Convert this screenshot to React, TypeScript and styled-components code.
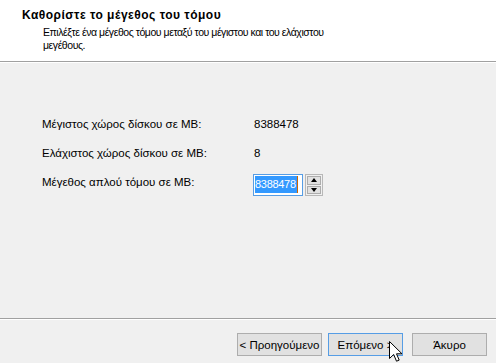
import React from "react";
import styled, { createGlobalStyle } from "styled-components";

const GlobalStyle = createGlobalStyle`
  html, body { margin: 0; padding: 0; background: #f0f0f0; }
  body { font-family: "Liberation Sans", Arial, sans-serif; color: #000; }
  * { box-sizing: border-box; }
`;

const Wizard = styled.div`
  position: relative;
  width: 496px;
  height: 363px;
  display: flex;
  flex-direction: column;
  background: #f0f0f0;
  overflow: hidden;
  font-size: 11.5px;
`;

const Header = styled.div`
  height: 62px;
  background: #ffffff;
  padding: 8px 0 0 22px;
  border-bottom: 1px solid #a0a0a0;
  box-shadow: 0 1px 0 #ffffff;
  flex: none;
`;

const Title = styled.div`
  font-weight: bold;
  font-size: 12px;
  letter-spacing: 0.5px;
  line-height: 14px;
`;

const Subtitle = styled.div`
  margin: 4px 0 0 21px;
  width: 300px;
  font-size: 10.5px;
  letter-spacing: -0.45px;
  line-height: 13px;
`;

const Body = styled.div`
  flex: 1;
  display: flex;
  flex-direction: column;
  gap: 15px;
  padding: 55px 0 0 42px;
`;

const Row = styled.div`
  display: grid;
  grid-template-columns: 211px auto;
  align-items: start;
  line-height: 14px;
`;

const Value = styled.div`
  padding-left: 1px;
`;

const UpDown = styled.div`
  display: flex;
  gap: 2px;
  height: 22px;
  margin-top: -1px;
`;

const TextBox = styled.div`
  width: 50px;
  height: 22px;
  border: 1px solid #569de5;
  background: #fff;
  padding: 1px 0 0 1px;
  display: flex;
  align-items: flex-start;
  overflow: hidden;
`;

const Selected = styled.span`
  background: #3399ff;
  color: #fff;
  line-height: 17px;
  font-size: 11px;
  letter-spacing: -0.3px;
  padding: 0 1px 0 0;
  border-right: 1px solid #cc6600;
`;

const Spinner = styled.div`
  width: 18px;
  height: 22px;
  border: 1px solid #b8b8b8;
  padding: 1px;
  display: flex;
  flex-direction: column;
  gap: 1px;
  background: #f0f0f0;
`;

const SpinButton = styled.div`
  flex: 1;
  border: 1px solid #adadad;
  background: #e1e1e1;
  display: flex;
  align-items: center;
  justify-content: center;
`;

const Arrow = styled.div<{ $up?: boolean }>`
  width: 0;
  height: 0;
  border-left: 3.5px solid transparent;
  border-right: 3.5px solid transparent;
  ${(p) => (p.$up ? "border-bottom: 4px solid #000;" : "border-top: 4px solid #000;")}
`;

const Footer = styled.div`
  height: 45px;
  flex: none;
  border-top: 1px solid #a0a0a0;
  box-shadow: inset 0 1px 0 #ffffff;
  display: flex;
  justify-content: flex-end;
  align-items: flex-start;
  padding: 14px 9px 0 0;
`;

const Button = styled.div<{ $w?: number; $focus?: boolean; $gap?: number }>`
  width: ${(p) => p.$w ?? 75}px;
  height: 23px;
  margin-left: ${(p) => p.$gap ?? 0}px;
  border: 1px solid ${(p) => (p.$focus ? "#569de5" : "#adadad")};
  background: #e1e1e1;
  display: flex;
  align-items: center;
  justify-content: center;
  white-space: nowrap;
  overflow: hidden;
  font-size: 11.5px;
`;

const Cursor = styled.svg`
  position: absolute;
  left: 389px;
  top: 341px;
`;

export default function App() {
  return (
    <>
      <GlobalStyle />
      <Wizard>
        <Header>
          <Title>Καθορίστε το μέγεθος του τόμου</Title>
          <Subtitle>
            Επιλέξτε ένα μέγεθος τόμου μεταξύ του μέγιστου και του ελάχιστου μεγέθους.
          </Subtitle>
        </Header>
        <Body>
          <Row>
            <div>Μέγιστος χώρος δίσκου σε MB:</div>
            <Value>8388478</Value>
          </Row>
          <Row>
            <div>Ελάχιστος χώρος δίσκου σε MB:</div>
            <Value>8</Value>
          </Row>
          <Row>
            <div>Μέγεθος απλού τόμου σε MB:</div>
            <UpDown>
              <TextBox>
                <Selected>8388478</Selected>
              </TextBox>
              <Spinner>
                <SpinButton>
                  <Arrow $up />
                </SpinButton>
                <SpinButton>
                  <Arrow />
                </SpinButton>
              </Spinner>
            </UpDown>
          </Row>
        </Body>
        <Footer>
          <Button $w={85}>&lt; Προηγούμενο</Button>
          <Button $focus $gap={6}>Επόμενο &gt;</Button>
          <Button $gap={9}>Άκυρο</Button>
        </Footer>
        <Cursor width="15" height="22" viewBox="0 0 15 22">
          <path
            d="M0.5 0.5 L0.5 17.5 L4.7 13.5 L7.5 20.2 L10.2 19.1 L7.5 12.8 L13 12.8 Z"
            fill="#fff"
            stroke="#000"
            strokeWidth="1"
            strokeLinejoin="miter"
          />
        </Cursor>
      </Wizard>
    </>
  );
}
